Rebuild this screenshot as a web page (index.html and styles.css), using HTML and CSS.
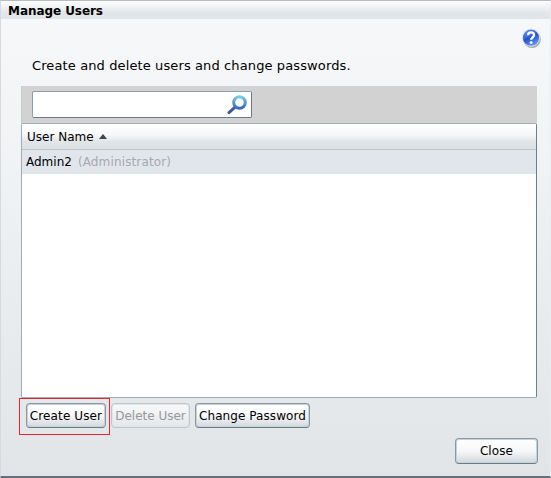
FILE: index.html
```html
<!DOCTYPE html>
<html lang="en">
<head>
<meta charset="utf-8">
<title>Manage Users</title>
<link rel="stylesheet" href="styles.css">
</head>
<body>
<main class="dialog">
  <header class="titlebar"><span class="title">Manage Users</span></header>
  <div class="help-row">
    <svg class="help" width="22" height="22" viewBox="0 0 22 22">
      <defs><linearGradient id="h" x1="0" y1="0" x2=".5" y2="1"><stop offset="0" stop-color="#6c9af4"/><stop offset=".45" stop-color="#3a6ce4"/><stop offset=".55" stop-color="#2350cc"/><stop offset="1" stop-color="#5b8df6"/></linearGradient>
      <filter id="soft"><feGaussianBlur stdDeviation=".7"/></filter></defs>
      <circle cx="12" cy="12.2" r="8.8" fill="#777" opacity=".6" filter="url(#soft)"/>
      <circle cx="11" cy="10.7" r="9" fill="#dfe5f3"/>
      <circle cx="11" cy="10.7" r="8.1" fill="url(#h)"/>
      <path d="M8 8.3C8.2 4.3 14.2 4.5 14.1 8.1c0 2.2-2.9 2.2-2.9 4.7" fill="none" stroke="#fff" stroke-width="2.4"/>
      <circle cx="11.1" cy="15.5" r="1.5" fill="#fff"/>
    </svg>
  </div>
  <p class="intro"><span class="intro-text">Create and delete users and change passwords.</span></p>
  <section class="users">
    <div class="toolbar">
      <div class="search">
        <svg width="20" height="20" viewBox="0 0 20 20">
          <defs><linearGradient id="g" x1="0" y1="0" x2="0" y2="1"><stop offset="0" stop-color="#7cc9e4"/><stop offset="1" stop-color="#3c65b8"/></linearGradient></defs>
          <path d="M8 12.2 2 17.6" stroke="#3a5ba2" stroke-width="3" stroke-linecap="round"/>
          <circle cx="12.5" cy="7.5" r="5.8" fill="#f4fbff" stroke="url(#g)" stroke-width="3"/>
        </svg>
      </div>
    </div>
    <div class="list">
      <div class="head"><span class="head-text">User Name</span><svg width="8" height="5" viewBox="0 0 8 5"><path d="M0 5 4 0 8 5Z" fill="#444"/></svg></div>
      <div class="row"><span class="name">Admin2</span><span class="role">(Administrator)</span></div>
    </div>
  </section>
  <div class="actions">
    <div class="highlight"><button class="btn create">Create User</button></div>
    <button class="btn delete" disabled>Delete User</button>
    <button class="btn change">Change Password</button>
  </div>
  <footer class="footer"><button class="btn close">Close</button></footer>
</main>
</body>
</html>
```
FILE: styles.css
```css
* { box-sizing: border-box; }
body { margin: 0; font: 12px "DejaVu Sans", sans-serif; color: #000; }
.dialog {
  width: 551px; height: 478px; overflow: hidden;
  border: solid; border-width: 1px 1px 2px; border-color: #babac2 #e9edf0 #62727f #d3dae1;
  background: linear-gradient(#f6f8f9, #f1f3f5 30%, #e1e5e8);
}
.titlebar { height: 18px; padding-left: 7px; line-height: 20px; background: linear-gradient(#fdfdfe, #e2e6e9 65%, #e1e5e8); }
.title { font-weight: bold; letter-spacing: -.06px; }
.help-row { height: 39px; display: flex; justify-content: flex-end; padding: 8px 8px 0 0; }
.intro { height: 28px; margin: 0; padding-left: 31px; line-height: 16px; font-size: 13px; }
.intro-text { letter-spacing: .115px; }
.users { width: 516px; margin-left: 20px; }
.toolbar { height: 37px; padding: 5px 0 0 10px; background: #d2d2d2; border-left: 1px solid #c6cacd; }
.search {
  width: 220px; height: 27px; padding: 3px 4px 0 0; display: flex; justify-content: flex-end;
  border: 1px solid #8c9eae; border-right-color: #657b8d; border-bottom-color: #657b8d; border-radius: 2px; background: #fff;
}
.list { height: 275px; border: 1px solid #9cacba; border-right-color: #6b7f90; border-radius: 2px; background: #fff; }
.head { height: 26px; padding: 0 5px; display: flex; align-items: center; gap: 5px; border-bottom: 1px solid #bec5ca; background: linear-gradient(#fff, #f5f7f8 45%, #e2e6e8 68%, #dbe0e3); }
.row { height: 24px; padding-left: 4px; display: flex; align-items: center; gap: 6px; background: #e1e6ed; }
.role { color: #a7a9ac; letter-spacing: .14px; }
.actions { height: 37px; display: flex; align-items: flex-start; padding-left: 18px; }
.highlight { width: 91px; height: 37px; padding: 4px 0 0 6px; border: 1px solid #e9262e; }
.btn {
  height: 25px; padding: 0; display: block; font: 12px "DejaVu Sans", sans-serif; color: #000; white-space: nowrap;
  border: 1px solid #8798a6; border-bottom-color: #667d8e; border-radius: 4px;
  background: linear-gradient(#fff, #f6f7f8 50%, #d4d8dc); box-shadow: inset 0 0 0 1px #c8d1d7;
}
.create { width: 80px; letter-spacing: .12px; }
.delete { width: 79px; margin: 5px 0 0 1px; color: #969899; border-color: #bdc6cc; box-shadow: inset 0 0 0 1px #e2e6e9; background: linear-gradient(#f8f9fa, #e4e7ea); }
.change { width: 115px; margin: 5px 0 0 5px; letter-spacing: .08px; }
.footer { display: flex; justify-content: flex-end; padding: 3px 12px 0 0; }
.close { width: 83px; height: 26px; letter-spacing: .1px; }
```
